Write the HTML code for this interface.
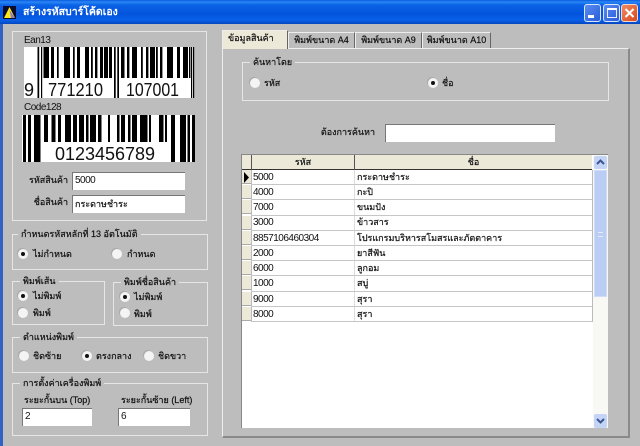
<!DOCTYPE html>
<html><head><meta charset="utf-8">
<style>
html,body{margin:0;padding:0}
body{width:640px;height:446px;overflow:hidden;position:relative;background:#bdbdbd;font-family:"Liberation Sans","DejaVu Sans","Noto Sans CJK SC",sans-serif;font-size:9px;color:#111;-webkit-text-stroke:.2px #111}
div,span{position:absolute;box-sizing:border-box;white-space:nowrap}
#w{left:0;top:0;width:640px;height:446px;overflow:hidden;filter:blur(.35px);background:#bdbdbd}
.title{left:0;top:0;width:640px;height:24px;background:linear-gradient(#0a5ae0 0,#2a86f4 2px,#0a62e6 5px,#0454dc 14px,#0a60e8 20px,#0446c0 24px)}
.group{border:1px solid #e6e6e6}
.leg{background:#bdbdbd;padding:0 3px;line-height:12px;height:13px}
.t{line-height:13px;height:13px}
.n{font-size:10px;letter-spacing:-.5px;-webkit-text-stroke:0}
.r{width:10px;height:10px;border-radius:50%;background:#f4f4f4;box-shadow:-1px -1px 0 #a8a8a8}
.r.on::after{content:"";position:absolute;left:3px;top:3px;width:4px;height:4px;border-radius:50%;background:#111}
.in{background:#fff;border-top:1px solid #777;border-left:1px solid #777;padding:1px 0 0 2px;line-height:14px}
.tab{background:#bdbdbd;border-top:1px solid #eee;border-left:1px solid #eee;border-right:1px solid #666;text-align:center;line-height:15px}
.cell{line-height:15px;height:15px}
.line{left:251px;width:341px;height:1px;background:#c6c6c6}
.ind{left:242px;width:9px;height:14px;background:#ece9d8;border-bottom:1px solid #aaa}
</style></head><body><div id="w">
<div class="title"></div>
<div style="left:0;top:24px;width:3px;height:422px;background:#2f62c4"></div>
<div style="left:3px;top:6px;width:13px;height:13px;background:#0b0b30"></div>
<svg style="position:absolute;left:3px;top:6px" width="13" height="13"><polygon points="1,12 6.5,1 12,12" fill="#ffe81a"/><polygon points="8,12 6.5,4 12,12" fill="#8a80c0"/></svg>
<div class="t" style="left:23px;top:6px;color:#fff;font-weight:bold;font-size:10.5px;-webkit-text-stroke:0">สร้างรหัสบาร์โค้ดเอง</div>
<div style="left:584px;top:4px;width:17px;height:18px;border-radius:3px;border:1px solid #dbe6fb;background:linear-gradient(135deg,#5a8cf0,#2a5cd8)"></div>
<div style="left:588px;top:15px;width:6px;height:3px;background:#fff"></div>
<div style="left:603px;top:4px;width:17px;height:18px;border-radius:3px;border:1px solid #dbe6fb;background:linear-gradient(135deg,#5a8cf0,#2a5cd8)"></div>
<div style="left:607px;top:8px;width:10px;height:10px;border:1px solid #e8eefc;border-top:2px solid #fff"></div>
<div style="left:621px;top:4px;width:17px;height:18px;border-radius:3px;border:1px solid #f4d8c8;background:linear-gradient(135deg,#f08a60,#d84a20)"></div>
<svg style="position:absolute;left:621px;top:4px" width="17" height="18"><path d="M4.5 5L12.5 13M12.5 5L4.5 13" stroke="#fff" stroke-width="2"/></svg>

<!-- left panel -->
<div class="group" style="left:12px;top:31px;width:195px;height:190px"></div>
<div class="t n" style="left:24px;top:34px">Ean13</div>
<svg style="position:absolute;left:24px;top:47px" width="171" height="51" viewBox="24 47 171 51">
<rect x="24" y="47" width="170" height="51" fill="#fff"/>
<g fill="#000">
<rect x="37.5" y="47" width="1.7" height="51"/><rect x="41" y="47" width="1.2" height="51"/>
<rect x="43.5" y="47" width="5.5" height="31"/><rect x="51" y="47" width="3" height="31"/><rect x="57" y="47" width="1.7" height="31"/><rect x="64" y="47" width="6" height="31"/><rect x="73" y="47" width="1.7" height="31"/><rect x="77" y="47" width="3" height="31"/><rect x="85" y="47" width="4" height="31"/><rect x="91" y="47" width="1.8" height="31"/><rect x="95" y="47" width="2.4" height="31"/><rect x="100" y="47" width="3" height="31"/><rect x="104" y="47" width="4" height="31"/><rect x="109" y="47" width="3" height="31"/>
<rect x="114" y="47" width="1.7" height="51"/><rect x="117.3" y="47" width="1.7" height="51"/>
<rect x="121" y="47" width="3.5" height="31"/><rect x="127" y="47" width="2.4" height="31"/><rect x="132" y="47" width="5" height="31"/><rect x="141" y="47" width="1.8" height="31"/><rect x="146" y="47" width="2.4" height="31"/><rect x="150" y="47" width="5" height="31"/><rect x="156" y="47" width="1.8" height="31"/><rect x="160" y="47" width="2.4" height="31"/><rect x="167" y="47" width="6" height="31"/><rect x="177" y="47" width="3" height="31"/><rect x="183" y="47" width="5" height="31"/><rect x="189" y="47" width="1.4" height="31"/>
<rect x="191" y="47" width="1.2" height="51"/><rect x="193" y="47" width="1.2" height="51"/>
</g>
<g font-family="Liberation Sans,sans-serif" font-size="18" fill="#111" style="-webkit-text-stroke:0"><text x="24" y="96">9</text><text x="48" y="96" textLength="55" lengthAdjust="spacingAndGlyphs">771210</text><text x="126" y="96" textLength="53" lengthAdjust="spacingAndGlyphs">107001</text></g>
</svg>
<div class="t n" style="left:24px;top:101px">Code128</div>
<svg style="position:absolute;left:22px;top:115px" width="174" height="48" viewBox="22 115 174 48">
<rect x="22" y="115" width="173" height="47" fill="#fff"/>
<g fill="#000">
<rect x="23" y="115" width="3" height="47"/><rect x="28" y="115" width="3" height="47"/><rect x="34" y="115" width="6.5" height="47"/>
<rect x="44" y="115" width="4" height="27"/><rect x="51.5" y="115" width="4" height="27"/><rect x="58" y="115" width="3" height="27"/><rect x="65" y="115" width="6" height="27"/><rect x="73" y="115" width="4" height="27"/><rect x="79" y="115" width="5" height="27"/><rect x="86" y="115" width="2.5" height="27"/><rect x="90" y="115" width="6" height="27"/><rect x="98" y="115" width="3.5" height="27"/><rect x="108" y="115" width="2" height="27"/><rect x="117" y="115" width="2.5" height="27"/><rect x="121" y="115" width="4" height="27"/><rect x="128" y="115" width="2.5" height="27"/><rect x="132" y="115" width="5" height="27"/><rect x="140" y="115" width="7.5" height="27"/><rect x="149" y="115" width="2" height="27"/><rect x="159" y="115" width="4.5" height="27"/><rect x="165" y="115" width="2" height="27"/>
<rect x="171" y="115" width="4" height="47"/><rect x="180" y="115" width="6" height="47"/><rect x="187.5" y="115" width="2.5" height="47"/><rect x="192" y="115" width="3" height="47"/>
</g>
<text x="55" y="160" font-family="Liberation Sans,sans-serif" font-size="18" fill="#111" style="-webkit-text-stroke:0" textLength="100" lengthAdjust="spacingAndGlyphs">0123456789</text>
</svg>
<div class="t" style="left:24px;top:174px;width:44px;text-align:right">รหัสสินค้า</div>
<div class="in n" style="left:72px;top:172px;width:113px;height:18px">5000</div>
<div class="t" style="left:24px;top:196px;width:44px;text-align:right">ชื่อสินค้า</div>
<div class="in" style="left:72px;top:195px;width:113px;height:18px">กระดาษชำระ</div>

<div class="group" style="left:12px;top:234px;width:196px;height:36px"></div>
<div class="leg" style="left:18px;top:228px">กำหนดรหัสหลักที่ 13 อัตโนมัติ</div>
<div class="r on" style="left:18px;top:249px"></div><div class="t" style="left:33px;top:248px">ไม่กำหนด</div>
<div class="r" style="left:112px;top:249px"></div><div class="t" style="left:127px;top:248px">กำหนด</div>

<div class="group" style="left:12px;top:281px;width:93px;height:44px"></div>
<div class="leg" style="left:20px;top:275px">พิมพ์เส้น</div>
<div class="r on" style="left:18px;top:291px"></div><div class="t" style="left:33px;top:290px">ไม่พิมพ์</div>
<div class="r" style="left:18px;top:308px"></div><div class="t" style="left:33px;top:307px">พิมพ์</div>

<div class="group" style="left:113px;top:282px;width:95px;height:44px"></div>
<div class="leg" style="left:121px;top:276px">พิมพ์ชื่อสินค้า</div>
<div class="r on" style="left:120px;top:292px"></div><div class="t" style="left:134px;top:291px">ไม่พิมพ์</div>
<div class="r" style="left:120px;top:308px"></div><div class="t" style="left:134px;top:308px">พิมพ์</div>

<div class="group" style="left:12px;top:337px;width:196px;height:36px"></div>
<div class="leg" style="left:20px;top:331px">ตำแหน่งพิมพ์</div>
<div class="r" style="left:19px;top:351px"></div><div class="t" style="left:33px;top:350px">ชิดซ้าย</div>
<div class="r on" style="left:82px;top:351px"></div><div class="t" style="left:96px;top:350px">ตรงกลาง</div>
<div class="r" style="left:144px;top:351px"></div><div class="t" style="left:158px;top:350px">ชิดขวา</div>

<div class="group" style="left:12px;top:383px;width:196px;height:53px"></div>
<div class="leg" style="left:20px;top:377px">การตั้งค่าเครื่องพิมพ์</div>
<div class="t" style="left:24px;top:394px">ระยะกั้นบน (Top)</div>
<div class="t" style="left:121px;top:394px">ระยะกั้นซ้าย (Left)</div>
<div class="in n" style="left:22px;top:408px;width:70px;height:18px">2</div>
<div class="in n" style="left:118px;top:408px;width:72px;height:18px">6</div>

<!-- tabs -->
<div style="left:222px;top:48px;width:408px;height:390px;border:1px solid #eee;border-right:2px solid #8a8a8a;border-bottom:2px solid #8a8a8a"></div>
<div class="tab" style="left:222px;top:30px;width:66px;height:19px;background:#ece9d8;border-bottom:0;z-index:2;text-align:left;padding-left:5px">ข้อมูลสินค้า</div>
<div class="tab" style="left:288px;top:32px;width:67px;height:16px">พิมพ์ขนาด A4</div>
<div class="tab" style="left:355px;top:32px;width:67px;height:16px">พิมพ์ขนาด A9</div>
<div class="tab" style="left:422px;top:32px;width:69px;height:16px">พิมพ์ขนาด A10</div>

<div class="group" style="left:242px;top:62px;width:367px;height:39px"></div>
<div class="leg" style="left:250px;top:56px">ค้นหาโดย</div>
<div class="r" style="left:250px;top:78px"></div><div class="t" style="left:264px;top:77px">รหัส</div>
<div class="r on" style="left:428px;top:78px"></div><div class="t" style="left:442px;top:77px">ชื่อ</div>
<div class="t" style="left:300px;top:126px;width:75px;text-align:right">ต้องการค้นหา</div>
<div class="in" style="left:385px;top:124px;width:170px;height:18px"></div>

<!-- grid -->
<div style="left:241px;top:154px;width:367px;height:274px;background:#fff;border-top:1px solid #888;border-left:1px solid #888"></div>
<div style="left:242px;top:155px;width:350px;height:15px;background:#ece9d8;border-bottom:1px solid #333"></div>
<div style="left:251px;top:155px;width:1px;height:15px;background:#555"></div>
<div style="left:354px;top:155px;width:1px;height:15px;background:#555"></div>
<div class="cell" style="left:252px;top:155px;width:102px;text-align:center">รหัส</div>
<div class="cell" style="left:355px;top:155px;width:237px;text-align:center">ชื่อ</div>
<div class="ind" style="top:170px"></div><div class="ind" style="top:185px"></div><div class="ind" style="top:200px"></div><div class="ind" style="top:216px"></div><div class="ind" style="top:231px"></div><div class="ind" style="top:246px"></div><div class="ind" style="top:261px"></div><div class="ind" style="top:276px"></div><div class="ind" style="top:292px"></div><div class="ind" style="top:307px"></div>
<svg style="position:absolute;left:243px;top:172px" width="7" height="11"><polygon points="1,0 6,5.5 1,11" fill="#000"/></svg>
<div style="left:251px;top:170px;width:1px;height:152px;background:#bbb"></div>
<div style="left:354px;top:170px;width:1px;height:152px;background:#ddd"></div>
<div style="left:592px;top:170px;width:1px;height:152px;background:#bbb"></div>
<div class="line" style="top:184px"></div><div class="line" style="top:199px"></div><div class="line" style="top:215px"></div><div class="line" style="top:230px"></div><div class="line" style="top:245px"></div><div class="line" style="top:260px"></div><div class="line" style="top:275px"></div><div class="line" style="top:291px"></div><div class="line" style="top:306px"></div><div class="line" style="top:321px"></div>
<div class="cell n" style="left:253px;top:170px">5000</div><div class="cell" style="left:357px;top:170px">กระดาษชำระ</div>
<div class="cell n" style="left:253px;top:185px">4000</div><div class="cell" style="left:357px;top:185px">กะปิ</div>
<div class="cell n" style="left:253px;top:200px">7000</div><div class="cell" style="left:357px;top:200px">ขนมปัง</div>
<div class="cell n" style="left:253px;top:215px">3000</div><div class="cell" style="left:357px;top:215px">ข้าวสาร</div>
<div class="cell n" style="left:253px;top:231px">8857106460304</div><div class="cell" style="left:357px;top:231px">โปรแกรมบริหารสโมสรและภัตตาคาร</div>
<div class="cell n" style="left:253px;top:246px">2000</div><div class="cell" style="left:357px;top:246px">ยาสีฟัน</div>
<div class="cell n" style="left:253px;top:261px">6000</div><div class="cell" style="left:357px;top:261px">ลูกอม</div>
<div class="cell n" style="left:253px;top:276px">1000</div><div class="cell" style="left:357px;top:276px">สบู่</div>
<div class="cell n" style="left:253px;top:292px">9000</div><div class="cell" style="left:357px;top:292px">สุรา</div>
<div class="cell n" style="left:253px;top:307px">8000</div><div class="cell" style="left:357px;top:307px">สุรา</div>

<!-- scrollbar -->
<div style="left:593px;top:155px;width:15px;height:273px;background:#f8f8f4"></div>
<div style="left:594px;top:170px;width:13px;height:127px;background:#b9cdf5;border:1px solid #cfdcf8"></div>
<div style="left:598px;top:232px;width:5px;height:5px;border-top:1px solid #e6eefc;border-bottom:1px solid #e6eefc"></div>
<div style="left:594px;top:156px;width:13px;height:13px;background:#c4d4f6;border-radius:2px"></div>
<div style="left:594px;top:414px;width:13px;height:14px;background:#c4d4f6;border-radius:2px"></div>
<svg style="position:absolute;left:594px;top:156px" width="13" height="13"><path d="M3 8L6.5 4.5L10 8" fill="none" stroke="#3a5590" stroke-width="2"/></svg>
<svg style="position:absolute;left:594px;top:414px" width="13" height="14"><path d="M3 5L6.5 8.5L10 5" fill="none" stroke="#3a5590" stroke-width="2"/></svg>
</div></body></html>
